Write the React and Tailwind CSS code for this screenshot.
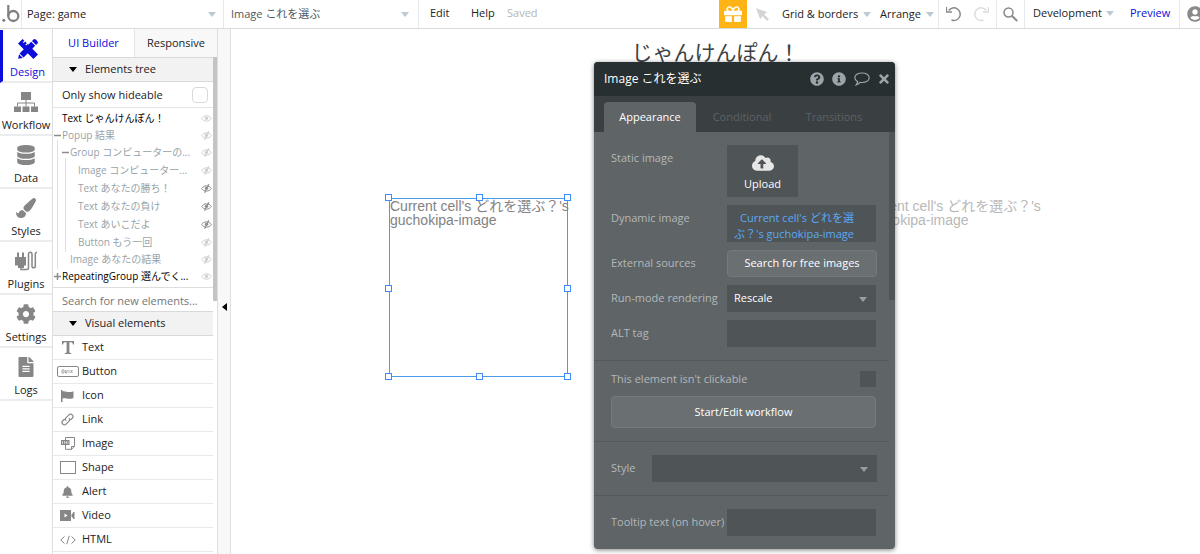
import React from "react";
import {
  FaBell,
  FaCloudUploadAlt,
  FaCog,
  FaDatabase,
  FaFileAlt,
  FaGift,
  FaInfoCircle,
  FaPaintBrush,
  FaQuestionCircle,
  FaTimes,
  FaUserCircle,
} from "react-icons/fa";

const RAIL = [
  { label: "Design", icon: DesignIcon, active: true },
  { label: "Workflow", icon: WorkflowIcon },
  { label: "Data", icon: FaDatabase },
  { label: "Styles", icon: FaPaintBrush },
  { label: "Plugins", icon: PluginsIcon },
  { label: "Settings", icon: FaCog },
  { label: "Logs", icon: FaFileAlt },
];

const TREE = [
  { label: "Text じゃんけんぽん！", level: 0, dark: true },
  { label: "Popup 結果", level: 0, toggle: "minus", hidden: true },
  { label: "Group コンピューターの...", level: 1, toggle: "minus", hidden: true },
  { label: "Image コンピューター...", level: 2, hidden: true },
  { label: "Text あなたの勝ち！", level: 2, hidden: true, strong: true },
  { label: "Text あなたの負け", level: 2, hidden: true, strong: true },
  { label: "Text あいこだよ", level: 2, hidden: true, strong: true },
  { label: "Button もう一回", level: 2, hidden: true },
  { label: "Image あなたの結果", level: 1, hidden: true },
  { label: "RepeatingGroup 選んでく...", level: 0, toggle: "plus", dark: true },
];

const ELEMENTS = [
  { label: "Text", icon: TextIcon },
  { label: "Button", icon: ButtonIcon },
  { label: "Icon", icon: FlagIcon },
  { label: "Link", icon: LinkIcon },
  { label: "Image", icon: ImageIcon },
  { label: "Shape", icon: ShapeIcon },
  { label: "Alert", icon: AlertIcon },
  { label: "Video", icon: VideoIcon },
  { label: "HTML", icon: HtmlIcon },
];

function Caret({ className }) {
  return (
    <svg viewBox="0 0 8 5" className={`h-[5px] w-2 shrink-0 fill-current ${className}`}>
      <path d="M0 0h8L4 5z" />
    </svg>
  );
}

function DesignIcon({ className }) {
  return (
    <svg viewBox="0 0 20 20" className={className} fill="currentColor">
      <path d="M4.600 0 6.300 1.700 4.800 3.200l.9.9 1.500-1.500 1.600 1.600-1.500 1.500.9.900 1.500-1.500L20 15.400 15.400 20 0 4.600z" />
      <path d="M15.200.8a2 2 0 0 1 2.800 0l1.200 1.200a2 2 0 0 1 0 2.800l-1.200 1.200-4-4z" />
      <path d="M13.200 2.800 17.200 6.800 5.600 18.400 1.600 14.400z" />
      <path d="M1 15.200 4.800 19 .2 19.800z" />
    </svg>
  );
}

function WorkflowIcon({ className }) {
  return (
    <svg viewBox="0 0 24 20" className={className} fill="currentColor">
      <path d="M7 0h10v8H7zM0 14.500h7V20H0zM8.500 14.500h7V20h-7zM17 14.500h7V20h-7z" />
      <path d="M3.500 14.500v-3.500h17v3.500M12 8v6.500" fill="none" stroke="currentColor" />
    </svg>
  );
}

function PluginsIcon({ className }) {
  return (
    <svg viewBox="0 0 22 20" className={className} fill="currentColor">
      <path d="M0 6h11v8.500H9V17H3v-2.500H0z" />
      <path d="M2 1.500h2V6H2zM7 1.500h2V6H7z" />
      <path
        d="M6 17v1.500h6a1.500 1.500 0 0 0 1.500-1.500V3A1.700 1.700 0 0 1 17 3v12.500a1.700 1.700 0 0 0 3.300 0V3.500A2 2 0 0 1 22 1.300"
        fill="none"
        stroke="currentColor"
        strokeWidth="1.500"
      />
    </svg>
  );
}

function TextIcon() {
  return (
    <svg viewBox="0 0 12 13" className="h-[13px] w-3 fill-current">
      <path d="M0 0h12v3.500h-1C10.700 1.800 10 1.200 8.300 1.200H7.400V11c0 .8.600 1 1.800 1.100v.9H2.800v-.9C4 12 4.600 11.800 4.600 11V1.200h-.9C2 1.200 1.300 1.800 1 3.500H0z" />
    </svg>
  );
}

function ButtonIcon() {
  return (
    <svg viewBox="0 0 22 11" className="h-[11px] w-[22px]" fill="none" stroke="currentColor">
      <rect x=".5" y=".5" width="21" height="10" rx="1.500" />
      <path d="M7 4H5v3h2V4M8.500 4v3h1.500V4M12 4v3M13.500 4l2 3M15.500 4l-2 3" strokeWidth=".7" />
    </svg>
  );
}

function FlagIcon() {
  return (
    <svg viewBox="0 0 13 12" className="h-3 w-[13px] fill-current">
      <path d="M0 0h1.500v12H0z" />
      <path d="M1 1.500C5 .3 6 3.500 12.500 1.200V8C7 10.300 5 7 1 8.600z" />
    </svg>
  );
}

function LinkIcon() {
  return (
    <svg viewBox="0 0 14 14" className="h-[13px] w-[13px]" fill="none" stroke="currentColor" strokeWidth="1.300">
      <path d="M5.500 8.500a2.600 2.600 0 0 1 0-3.500l3-3a2.500 2.500 0 0 1 3.600 3.600L10 7.700" />
      <path d="M8.500 5.500a2.600 2.600 0 0 1 0 3.500l-3 3a2.500 2.500 0 0 1-3.600-3.600L4 6.300" />
    </svg>
  );
}

function ImageIcon() {
  return (
    <svg viewBox="0 0 14 13" className="h-[13px] w-[14px]" fill="none" stroke="currentColor">
      <path d="M4.500 3V.5h9v8.800l-3 3h-6V8M13.500 9.500h-3v3" />
      <rect x="0" y="3" width="8.500" height="5" fill="currentColor" stroke="none" />
      <path d="M1.500 4v3M3.500 6.800V4.500l1 1 1-1v2.300M7 4.300v2.500" stroke="#fff" strokeWidth=".6" />
    </svg>
  );
}

function ShapeIcon() {
  return (
    <svg viewBox="0 0 16 13" className="h-[13px] w-4" fill="none" stroke="currentColor">
      <rect x=".5" y=".5" width="15" height="12" />
    </svg>
  );
}

function AlertIcon() {
  return <FaBell className="h-3 w-[11px]" />;
}

function VideoIcon() {
  return (
    <svg viewBox="0 0 15 11" className="h-[11px] w-[15px] fill-current">
      <path fillRule="evenodd" d="M0 0h11v11H0zM4.500 3.500v4l3-2z" />
      <path d="m11.500 4.500 1.500-1.500V2h1.500v7H13V8l-1.500-1.500z" />
    </svg>
  );
}

function HtmlIcon() {
  return (
    <svg viewBox="0 0 16 10" className="h-2.5 w-4" fill="none" stroke="currentColor">
      <path d="M4.500 1.500.8 5l3.700 3.500M11.500 1.500 15.200 5l-3.700 3.500M9.300.8 6.700 9.200" />
    </svg>
  );
}

function EyeIcon({ slashed, className }) {
  return (
    <svg viewBox="0 0 11 9" className={`h-[9px] w-[11px] shrink-0 ${className}`} fill="none" stroke="currentColor">
      <path d="M.6 4.500C3 .9 8 .9 10.400 4.500 8 8 3 8 .6 4.500z" />
      <circle cx="5.500" cy="4.200" r="1.700" fill="currentColor" stroke="none" />
      {slashed && <path d="M7.800.3 3.600 8.700" strokeWidth="1.200" />}
    </svg>
  );
}

function UndoIcon({ className }) {
  return (
    <svg viewBox="0 0 16 16" className={`h-4 w-4 ${className}`} fill="none" stroke="currentColor">
      <path d="M2.800 4.500A6.300 6.300 0 1 1 5.500 14" strokeWidth="1.500" />
      <path d="M.5 1v5H6" strokeWidth="1.300" />
    </svg>
  );
}

function BubbleLogo() {
  return (
    <svg viewBox="0 0 18 18" className="h-[18px] w-[18px] text-[#808080]">
      <circle cx="1.800" cy="15.300" r="1.500" fill="currentColor" />
      <path d="M6.300 0v11" stroke="currentColor" strokeWidth="2.200" />
      <circle cx="11.300" cy="11" r="5" fill="none" stroke="currentColor" strokeWidth="2.300" />
    </svg>
  );
}

function TopBar() {
  return (
    <header className="flex h-[29px] shrink-0 items-stretch border-b border-[#d9dcde] bg-white">
      <div className="flex w-[22px] shrink-0 items-center border-r border-[#e3e9ec] pl-0.5">
        <BubbleLogo />
      </div>
      <button className="flex w-[202px] shrink-0 items-center justify-between border-r border-[#e3e9ec] pl-[5px] pr-[7px]">
        Page: game
        <Caret className="text-[#bccad2]" />
      </button>
      <button className="flex w-[195px] shrink-0 items-center justify-between border-r border-[#e3e9ec] pl-[7px] pr-[9px] text-[#50585c]">
        Image これを選ぶ
        <Caret className="text-[#bccad2]" />
      </button>
      <nav className="flex items-center pb-0.5 pl-[11px]">
        <button className="w-[41px] text-left">Edit</button>
        <button className="w-9 text-left">Help</button>
        <span className="text-[#b5b5b5]">Saved</span>
      </nav>

      <div className="ml-auto flex shrink-0 items-stretch">
        <button aria-label="Gifts" className="flex w-7 items-center justify-center bg-[#fdb414] text-white">
          <FaGift className="h-[18px] w-[18px]" />
        </button>
        <button aria-label="Pointer" className="flex w-[35px] items-center pl-[9px] text-[#d4d4d4]">
          <svg viewBox="0 0 13 13" className="h-[13px] w-[13px] fill-current">
            <path d="M0 0 11.500 4.300 8 6.200 13 11 11 13 6.200 8 4.300 11.500z" />
          </svg>
        </button>
        <button className="flex w-[98px] items-center gap-[5px]">
          Grid &amp; borders
          <Caret className="text-[#bccad2]" />
        </button>
        <button className="flex w-[59px] items-center gap-[5px] border-r border-[#e3e9ec]">
          Arrange
          <Caret className="text-[#bccad2]" />
        </button>
        <div className="flex w-[58px] items-center justify-between border-r border-[#e3e9ec] px-[7px]">
          <button aria-label="Undo">
            <UndoIcon className="text-[#8a8a8a]" />
          </button>
          <button aria-label="Redo">
            <UndoIcon className="-scale-x-100 text-[#dcdcdc]" />
          </button>
        </div>
        <button aria-label="Search" className="flex w-7 items-center justify-center border-r border-[#e3e9ec] text-[#8a8a8a]">
          <svg viewBox="0 0 15 15" className="h-[15px] w-[15px]" fill="none" stroke="currentColor">
            <circle cx="5.500" cy="5.500" r="4.500" strokeWidth="1.500" />
            <path d="m8.800 8.800 5.400 5.200" strokeWidth="2" />
          </svg>
        </button>
        <button className="flex w-[105px] items-center justify-between pb-0.5 pl-2 pr-4">
          Development
          <Caret className="text-[#bccad2]" />
        </button>
        <a href="#" className="flex w-[50px] items-center border-r border-[#e3e9ec] pb-0.5 text-[#0d0ddb]">
          Preview
        </a>
        <button aria-label="Account" className="flex w-5 items-center overflow-hidden pl-[7px] text-[#8a8a8a]">
          <FaUserCircle className="h-4 w-4 shrink-0" />
        </button>
      </div>
    </header>
  );
}

function Rail() {
  return (
    <nav className="w-[53px] shrink-0 border-r border-[#dedede] bg-white pt-px">
      {RAIL.map(({ label, icon: Icon, active }) => (
        <a
          key={label}
          href="#"
          className={`flex h-[53px] flex-col items-center justify-end border-b-2 border-[#ececec] ${
            active ? "border-l-[3px] border-l-[#0d0ddb] text-[#0d0ddb]" : ""
          }`}
        >
          <Icon className={active ? "h-5 w-5" : "h-5 w-6 text-[#868686]"} />
          <span className="mt-1 leading-[18px]">{label}</span>
        </a>
      ))}
    </nav>
  );
}

function SectionHeader({ children }) {
  return (
    <button className="flex h-[25px] w-full items-center border-y border-[#d9d9d9] bg-[#f2f2f2] pl-4 text-left">
      <Caret className="mr-2 text-black" />
      {children}
    </button>
  );
}

function TreeRow({ label, level, toggle, dark, hidden, strong }) {
  return (
    <li
      className={`flex items-center text-[10px] ${
        level === 2 ? "h-[18px] pl-4" : level === 1 ? "h-[17px] pl-2" : "h-[17px]"
      } ${dark ? "text-black" : "text-[#97a3a8]"}`}
    >
      <span className="flex w-[9px] shrink-0 justify-center text-[#8c8c8c]">
        {toggle && (
          <svg viewBox="0 0 7 7" className="h-[7px] w-[7px]" stroke="currentColor" strokeWidth="1.500">
            <path d={toggle === "plus" ? "M0 3.500h7M3.500 0v7" : "M0 3.500h7"} />
          </svg>
        )}
      </span>
      <span className="grow whitespace-nowrap">{label}</span>
      <EyeIcon slashed={hidden} className={`mr-px ${strong ? "text-[#8f8f8f]" : "text-[#cfcfcf]"}`} />
    </li>
  );
}

function LeftPanel() {
  return (
    <aside className="flex w-[165px] shrink-0 flex-col overflow-hidden border-r border-[#dedede] bg-white">
      <div className="flex h-7 shrink-0">
        <button className="w-[82px] border-r border-[#e6e6e6] text-[#0d0ddb]">UI Builder</button>
        <button className="grow bg-[#f8f8f8]">Responsive</button>
      </div>
      <div className="flex">
        <div className="min-w-0 grow">
          <SectionHeader>Elements tree</SectionHeader>
          <label className="flex h-[26px] items-center justify-between border-b border-[#e6e6e6] pl-[9px] pr-[5px] pt-px">
            Only show hideable
            <input
              type="checkbox"
              className="h-4 w-4 appearance-none rounded-[4px] border border-[#d9d9d9] bg-white"
            />
          </label>
          <ul className="relative h-[180px] border-b border-[#dedede] pt-0.5">
            {TREE.map((row) => (
              <TreeRow key={row.label} {...row} />
            ))}
            {/* indent guides */}
            <span className="absolute left-1 top-8 h-[129px] w-px bg-[#e0e0e0]" />
            <span className="absolute left-3 top-[50px] h-[94px] w-px bg-[#e0e0e0]" />
          </ul>
          <input
            aria-label="Search for new elements"
            placeholder="Search for new elements..."
            className="block h-[23px] w-full pl-[9px] pt-px placeholder:text-[#757575] focus:outline-none"
          />
        </div>
        <div className="w-1 shrink-0">
          <div className="h-[244px] bg-[#c4c4c4]" />
        </div>
      </div>
      <div className="pr-1">
        <SectionHeader>Visual elements</SectionHeader>
        <ul>
          {ELEMENTS.map(({ label, icon: Icon }) => (
            <li key={label} className="flex h-6 items-center border-b border-[#e9e9e9]">
              <span className="flex w-[29px] shrink-0 justify-center text-[#868686]">
                <Icon />
              </span>
              {label}
            </li>
          ))}
        </ul>
      </div>
    </aside>
  );
}

const HANDLES = [
  "-left-[5px] -top-[5px]",
  "left-[86px] -top-[5px]",
  "-right-1 -top-[5px]",
  "-left-[5px] top-[86px]",
  "-right-1 top-[86px]",
  "-left-[5px] -bottom-1",
  "left-[86px] -bottom-1",
  "-right-1 -bottom-1",
];

function Canvas() {
  return (
    <main className="relative min-w-0 grow overflow-hidden bg-white">
      <h1 className="pt-3 text-center font-['Liberation_Sans','Noto_Sans_CJK_JP',sans-serif] text-[21px] leading-6 text-[#3c4143]">
        じゃんけんぽん！
      </h1>
      <div className="absolute left-[158px] top-[169px] h-[179px] w-[179px] border border-[#4a9be8] font-['Liberation_Sans','Noto_Sans_CJK_JP',sans-serif] text-sm leading-[14px] text-[#828282]">
        <p className="whitespace-nowrap">
          Current cell's どれを選ぶ？'s
          <br />
          guchokipa-image
        </p>
        {HANDLES.map((place) => (
          <span key={place} className={`absolute h-[7px] w-[7px] border border-[#3d8bfd] bg-white ${place}`} />
        ))}
      </div>
      <div className="absolute left-[631px] top-[170px] font-['Liberation_Sans','Noto_Sans_CJK_JP',sans-serif] text-sm leading-[14px] text-[#b8b8b8]">
        <p className="whitespace-nowrap">
          Current cell's どれを選ぶ？'s
          <br />
          guchokipa-image
        </p>
      </div>
      <PropertyEditor />
    </main>
  );
}

function Field({ label, htmlFor, children, className = "" }) {
  return (
    <div className={`flex items-start ${className}`}>
      <label htmlFor={htmlFor} className="w-[116px] shrink-0 whitespace-nowrap leading-[26px]">
        {label}
      </label>
      {children}
    </div>
  );
}

function PropertyEditor() {
  return (
    <section className="absolute left-[363px] top-[33px] w-[301px] overflow-hidden rounded-[4px] bg-[#5f6467] shadow-[0_1px_5px_rgba(0,0,0,0.5)]">
      <div className="flex h-[34px] items-center bg-[#272f31] pl-2.5 pr-[5px] text-xs text-white">
        <h2 className="grow">Image これを選ぶ</h2>
        <div className="flex items-center gap-2 text-[#9ba5a9]">
          <button aria-label="Help">
            <FaQuestionCircle className="h-3.5 w-3.5" />
          </button>
          <button aria-label="Info">
            <FaInfoCircle className="h-3.5 w-3.5" />
          </button>
          <button aria-label="Comments">
            <svg viewBox="0 0 16 14" className="h-[14px] w-4" fill="none" stroke="currentColor" strokeWidth="1.200">
              <path d="M8 1c4 0 7.200 2 7.200 4.800S12 10.500 8 10.500c-.7 0-1.300 0-1.900-.2-.9 1.200-2.200 2.200-3.900 2.500.8-.9 1.300-1.900 1.400-3.200C1.900 8.700.8 7.400.8 5.800.8 3 4 1 8 1z" />
            </svg>
          </button>
          <button aria-label="Close">
            <FaTimes className="h-3.5 w-3" />
          </button>
        </div>
      </div>
      <div className="flex h-9 items-end bg-[#3a3f41] pl-2.5 text-[#5c6265]">
        <button className="h-[30px] w-[92px] rounded-t-[4px] bg-[#5f6467] text-white">Appearance</button>
        <button className="h-[30px] w-[92px]">Conditional</button>
        <button className="h-[30px] w-[92px]">Transitions</button>
      </div>
      <div className="flex text-[#b3b8ba]">
        <div className="min-w-0 grow">
          <div className="flex flex-col gap-2 border-b border-[#55595c] pb-[13px] pl-[17px] pt-[13px]">
            <Field label="Static image" htmlFor="upload">
              <button
                id="upload"
                className="flex h-[52px] w-[71px] flex-col items-center justify-center gap-1 bg-[#4f5457] pt-1 text-white"
              >
                <FaCloudUploadAlt className="h-[18px] w-[22px] text-[#e6e6e6]" />
                Upload
              </button>
            </Field>
            <Field label="Dynamic image" htmlFor="dynamic">
              <button
                id="dynamic"
                className="h-[37px] w-[149px] bg-[#4f5457] pl-[7px] pt-1 text-left leading-4 text-[#5aa9f5]"
              >
                <span className="pl-1.5">Current cell's どれを選</span>
                <br />
                ぶ？'s guchokipa-image
              </button>
            </Field>
            <Field label="External sources" htmlFor="search-images">
              <button
                id="search-images"
                className="h-[27px] w-[150px] rounded-sm border border-[#74797c] bg-[#6a6f72] text-white"
              >
                Search for free images
              </button>
            </Field>
            <Field label="Run-mode rendering" htmlFor="rendering">
              <div className="relative">
                <select
                  id="rendering"
                  className="block h-[27px] w-[149px] appearance-none bg-[#4f5457] px-[7px] text-white"
                >
                  <option>Rescale</option>
                </select>
                <Caret className="pointer-events-none absolute right-[9px] top-3 text-[#999ea1]" />
              </div>
            </Field>
            <Field label="ALT tag" htmlFor="alt">
              <input id="alt" className="h-[27px] w-[149px] bg-[#4f5457] px-[7px] text-white" />
            </Field>
          </div>
          <div className="border-b border-[#55595c] pb-[13px] pl-[17px] pr-[13px] pt-[5px]">
            <label className="flex h-[26px] items-center justify-between">
              This element isn't clickable
              <input type="checkbox" className="h-4 w-4 appearance-none bg-[#4f5457]" />
            </label>
            <button className="mt-1 h-8 w-full rounded-sm border border-[#74797c] bg-[#6a6f72] text-white">
              Start/Edit workflow
            </button>
          </div>
          <div className="flex items-center border-b border-[#55595c] py-[13px] pl-[17px]">
            <label htmlFor="style" className="w-[41px]">
              Style
            </label>
            <div className="relative">
              <select
                id="style"
                className="block h-[27px] w-[225px] appearance-none bg-[#4f5457] px-[7px] text-white"
              />
              <Caret className="pointer-events-none absolute right-[9px] top-3 text-[#999ea1]" />
            </div>
          </div>
          <Field label="Tooltip text (on hover)" htmlFor="tooltip" className="py-[13px] pl-[17px]">
            <input id="tooltip" className="h-[27px] w-[149px] bg-[#4f5457] px-[7px] text-white" />
          </Field>
        </div>
        <div className="w-1.5 shrink-0">
          <div className="h-[168px] bg-[#4f5457]" />
        </div>
      </div>
    </section>
  );
}

export default function App() {
  return (
    <div className="flex h-screen flex-col overflow-hidden bg-white font-['Open_Sans','Noto_Sans_CJK_JP',sans-serif] text-[11px] text-[#222]">
      <TopBar />
      <div className="flex min-h-0 grow">
        <Rail />
        <LeftPanel />
        <button
          aria-label="Collapse panel"
          className="flex w-[13px] shrink-0 items-center justify-center border-r border-[#e0e0e0] bg-[#f8f8f8] pb-0.5"
        >
          <svg viewBox="0 0 5 8" className="mt-8 h-2 w-[5px] fill-black">
            <path d="M5 0v8L0 4z" />
          </svg>
        </button>
        <Canvas />
      </div>
    </div>
  );
}
